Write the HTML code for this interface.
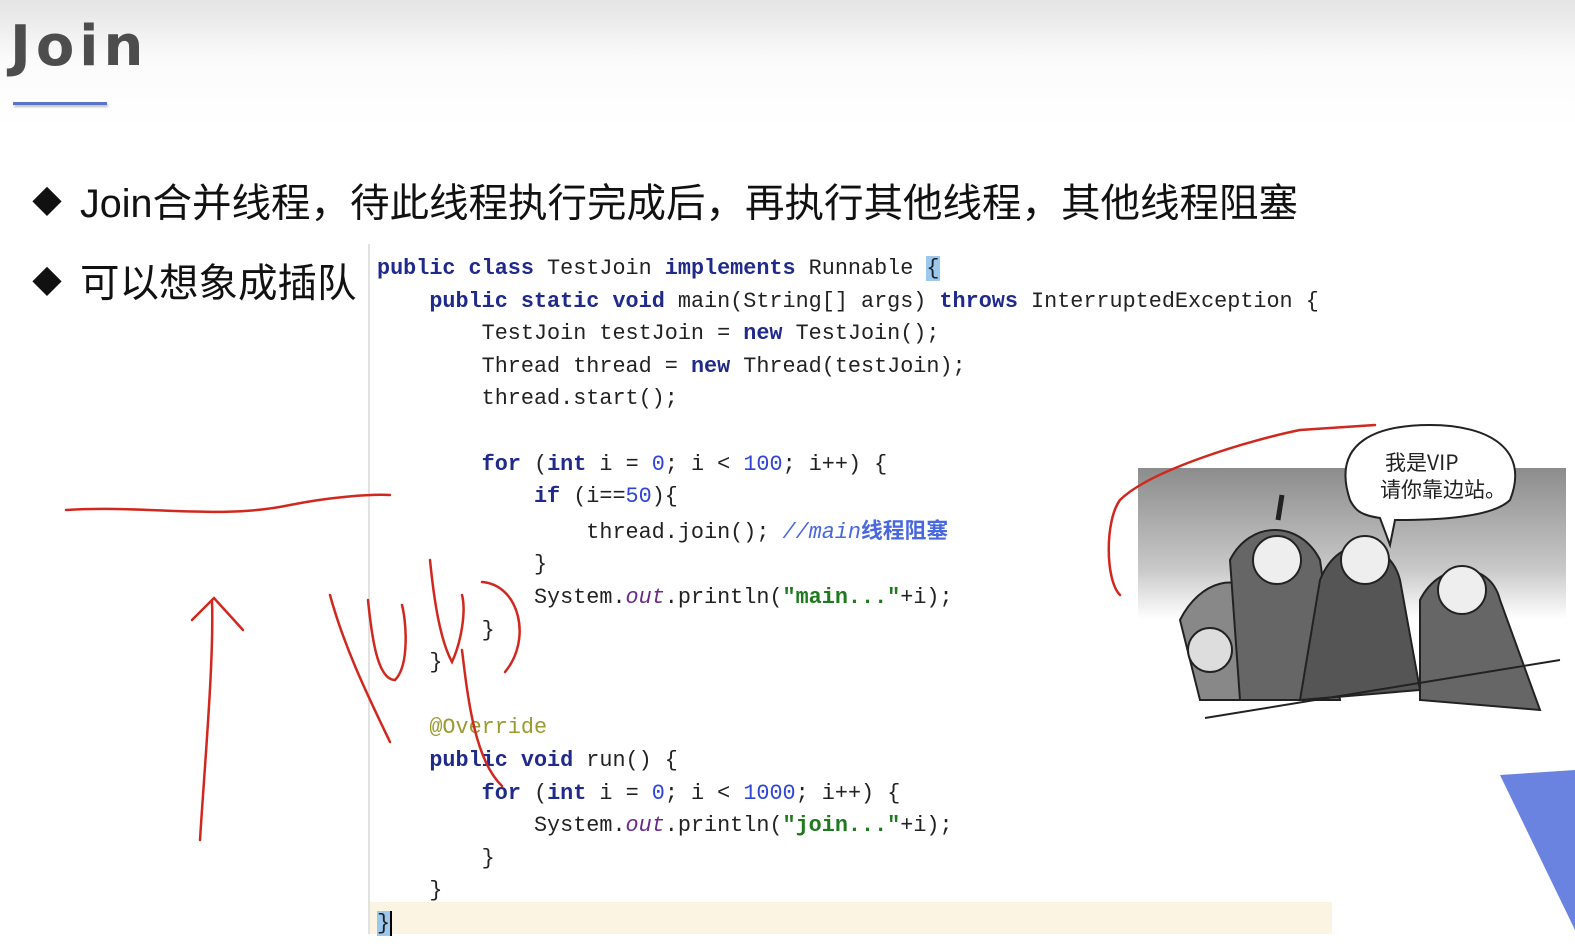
<!DOCTYPE html>
<html><head><meta charset="utf-8"><style>
body{margin:0;width:1575px;height:944px;overflow:hidden;position:relative;background:#fff;font-family:"Liberation Sans","Noto Sans CJK SC",sans-serif}
.top{position:absolute;left:0;top:0;width:1575px;height:160px;background:linear-gradient(#e4e4e4,#fbfbfb 60px,#fff 130px)}
h1{position:absolute;left:10px;top:14px;margin:0;font-size:56px;font-weight:bold;color:#4d4d4d;letter-spacing:5px;font-family:"DejaVu Sans",sans-serif}
.ul{position:absolute;left:13px;top:102px;width:94px;height:3px;background:#5a74c8;box-shadow:1px 2px 2px #bbb}
.b{position:absolute;left:32px;font-size:39.5px;color:#111;white-space:nowrap}
.b span{font-size:30px;margin-right:18px;position:relative;top:-4px}
.gut{position:absolute;left:368px;top:244px;width:2px;height:690px;background:#e2e2e2}
pre{position:absolute;left:377px;top:253px;margin:0;font-family:"Liberation Mono",monospace;font-size:21.8px;line-height:32.6px;color:#222}
.k{color:#1f2a8a;font-weight:bold}.n{color:#2f45d6}.s{color:#1f7a1f;font-weight:bold}.c{color:#4a68dd;font-style:italic}.o{color:#6a2a8a;font-style:italic}.a{color:#9a9a30}
.cur{position:absolute;left:370px;top:902px;width:962px;height:32px;background:#fbf4e2}
.cart{position:absolute;left:1138px;top:468px;width:428px;height:252px;background:linear-gradient(#8c8c8c,#c8c8c8 40%,#fff 60%)}
</style></head><body>
<div class="top"></div>
<h1>Join</h1><div class="ul"></div>
<div class="b" style="top:172px"><span>◆</span>Join合并线程，待此线程执行完成后，再执行其他线程，其他线程阻塞</div>
<div class="b" style="top:252px"><span>◆</span>可以想象成插队</div>
<div class="cur"></div>
<div class="gut"></div>
<pre><span class="k">public class</span> TestJoin <span class="k">implements</span> Runnable <span style="background:#9cc8ee">{</span>
    <span class="k">public static void</span> main(String[] args) <span class="k">throws</span> InterruptedException {
        TestJoin testJoin = <span class="k">new</span> TestJoin();
        Thread thread = <span class="k">new</span> Thread(testJoin);
        thread.start();

        <span class="k">for</span> (<span class="k">int</span> i = <span class="n">0</span>; i &lt; <span class="n">100</span>; i++) {
            <span class="k">if</span> (i==<span class="n">50</span>){
                thread.join(); <span class="c">//main</span><span class="c" style="font-family:'Noto Sans CJK SC',sans-serif;font-style:normal;font-weight:bold">线程阻塞</span>
            }
            System.<span class="o">out</span>.println(<span class="s">"main..."</span>+i);
        }
    }

    <span class="a">@Override</span>
    <span class="k">public void</span> run() {
        <span class="k">for</span> (<span class="k">int</span> i = <span class="n">0</span>; i &lt; <span class="n">1000</span>; i++) {
            System.<span class="o">out</span>.println(<span class="s">"join..."</span>+i);
        }
    }
<span style="background:#9cc8ee">}</span><span style="border-left:2px solid #000"></span></pre>
<div class="cart"></div>
<svg style="position:absolute;left:0;top:0" width="1575" height="944">
<g fill="#777" stroke="#222" stroke-width="2">
<path d="M1180 620 C1200 580 1240 570 1260 600 L1270 700 L1200 700 Z" fill="#888"/>
<path d="M1230 560 C1250 520 1300 520 1320 560 L1340 700 L1240 700Z" fill="#666"/>
<path d="M1320 580 C1340 530 1390 540 1400 580 L1420 690 L1300 700Z" fill="#555"/>
<path d="M1420 600 C1440 560 1490 560 1500 600 L1540 710 L1420 700Z" fill="#666"/>
<circle cx="1277" cy="560" r="24" fill="#eee"/><circle cx="1365" cy="560" r="24" fill="#eee"/><circle cx="1462" cy="590" r="24" fill="#eee"/><circle cx="1210" cy="650" r="22" fill="#ddd"/>
<path d="M1205 718 L1560 660" fill="none"/>
<path d="M1350 500 C1330 440 1380 425 1430 425 C1490 425 1530 450 1510 500 C1490 520 1420 520 1395 520 L1390 545 L1380 518 C1360 515 1355 510 1350 500Z" fill="#fff"/>
<path d="M1282 495 L1278 520" stroke-width="5"/>
</g>
<text x="1385" y="470" font-size="21" font-family="Noto Sans CJK SC,sans-serif" fill="#222">我是VIP</text>
<text x="1380" y="497" font-size="21" font-family="Noto Sans CJK SC,sans-serif" fill="#222">请你靠边站。</text>
<path d="M1500 775 L1575 770 L1575 930 Z" fill="#6a82e0"/>
<g fill="none" stroke="#d0281e" stroke-width="2.5" stroke-linecap="round">
<path d="M66 510 C150 505 220 520 290 505 C330 497 370 494 390 495"/>
<path d="M200 840 C205 760 214 660 212 600"/><path d="M192 620 L214 598 L243 630"/>
<path d="M330 595 C345 650 370 700 390 742"/>
<path d="M368 600 C372 640 378 680 395 680 C410 665 406 620 402 605"/>
<path d="M430 560 C434 600 440 640 452 662 C462 640 466 610 462 595"/>
<path d="M482 582 C520 585 532 640 505 672"/>
<path d="M462 650 C468 700 475 760 502 786"/>
<path d="M1120 595 C1105 580 1105 520 1120 500 C1150 470 1250 440 1300 430 L1375 425"/>
</g>
</svg>
</body></html>
